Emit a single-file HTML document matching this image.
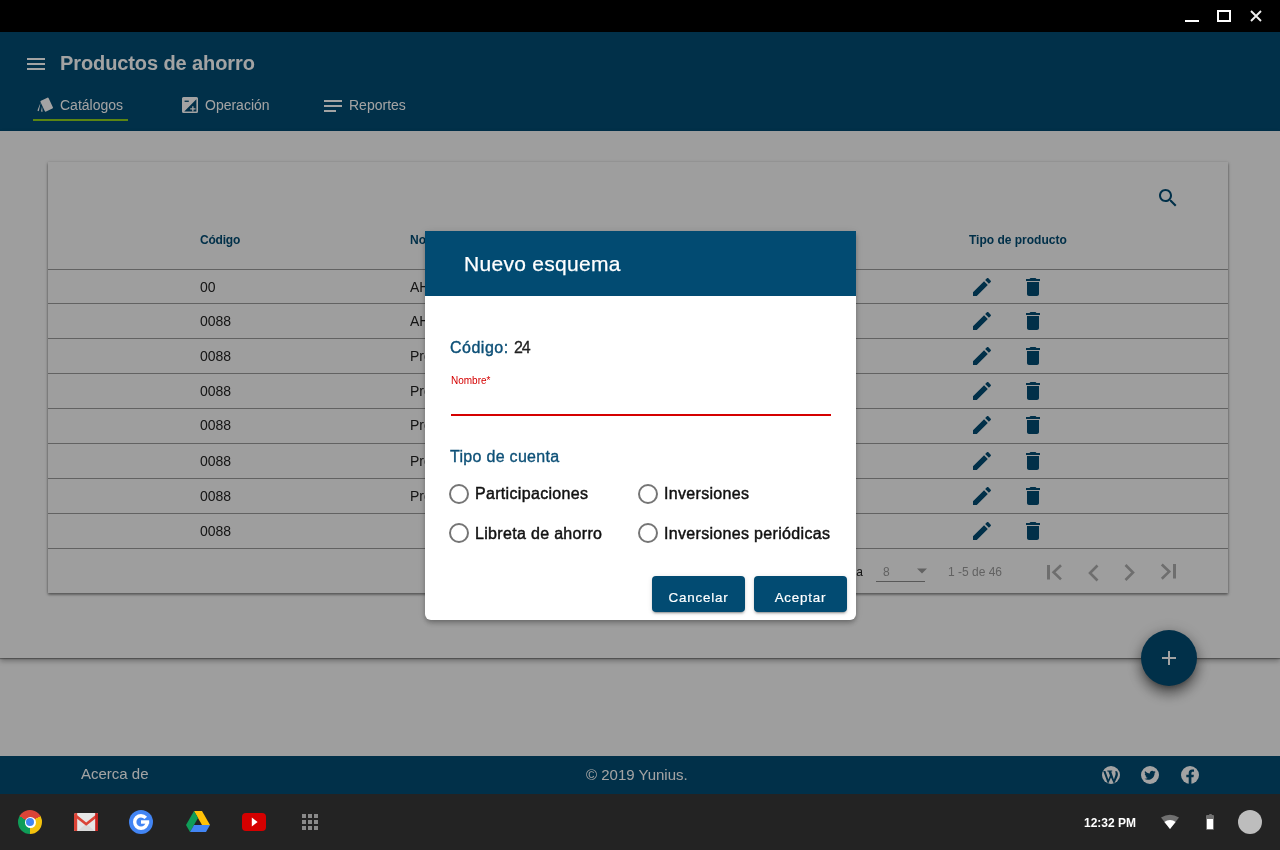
<!DOCTYPE html>
<html><head><meta charset="utf-8">
<style>
*{margin:0;padding:0;box-sizing:border-box}
html,body{width:1280px;height:850px;overflow:hidden;background:#f7f7f7;font-family:"Liberation Sans",sans-serif}
.abs{position:absolute}
.t{position:absolute;white-space:nowrap;line-height:1;will-change:transform}
#titlebar{left:0;top:0;width:1280px;height:32px;background:#000}
#app{left:0;top:32px;width:1280px;height:762px;background:#f7f7f7;overflow:hidden}
#shelf{left:0;top:794px;width:1280px;height:56px;background:#232323}
#overlay{left:0;top:32px;width:1280px;height:762px;background:rgba(0,0,0,0.36)}
</style></head>
<body>
<div id="app" class="abs">
<div class="abs" style="left:0;top:0;width:1280px;height:99px;background:#024b72"></div>
<div class="abs" style="left:27px;top:26px;width:18px;height:2px;background:#fff"></div>
<div class="abs" style="left:27px;top:31px;width:18px;height:2px;background:#fff"></div>
<div class="abs" style="left:27px;top:36px;width:18px;height:2px;background:#fff"></div>
<div class="t" style="left:60px;top:21.07px;font-size:20px;color:#fff;font-weight:bold;letter-spacing:-0.1px">Productos de ahorro</div>
<div class="t" style="left:60px;top:66.15px;font-size:14px;color:#fff;font-weight:normal">Catálogos</div>
<div class="t" style="left:205px;top:66.15px;font-size:14px;color:#fff;font-weight:normal">Operación</div>
<div class="t" style="left:349px;top:66.15px;font-size:14px;color:#fff;font-weight:normal">Reportes</div>
<div class="abs" style="left:33px;top:87px;width:95px;height:1.5px;background:#8fd11f"></div>
<svg class="abs" style="left:36px;top:65px" width="18" height="16" viewBox="0 0 18 16">
<rect x="6.2" y="1.6" width="9" height="12" rx="1" transform="rotate(-25 10.7 7.6)" fill="#fff"/>
<path d="M4.6 5.5 L1.4 13.6 L2.8 14.2 Z" fill="#fff"/><path d="M6.0 9.5 L5.0 14.6 L6.6 14.8 Z" fill="#fff"/>
</svg>
<svg class="abs" style="left:182px;top:65px" width="16" height="16" viewBox="0 0 16 16">
<path d="M1.5 0h13A1.5 1.5 0 0 1 16 1.5v13a1.5 1.5 0 0 1-1.5 1.5h-13A1.5 1.5 0 0 1 0 14.5v-13A1.5 1.5 0 0 1 1.5 0z M14.4 2.2 L2.2 14.4 H14.4 Z" fill="#fff" fill-rule="evenodd"/>
<rect x="2.6" y="3.6" width="4.2" height="1.3" fill="#024b72"/>
<rect x="3" y="3.6" width="0" height="0" fill="#fff"/>
<path d="M10.2 9.2h1.3v2h2v1.3h-2v2h-1.3v-2h-2v-1.3h2z" fill="#fff"/>
</svg>
<div class="abs" style="left:324px;top:68px;width:18px;height:2px;background:#fff"></div>
<div class="abs" style="left:324px;top:73px;width:18px;height:2px;background:#fff"></div>
<div class="abs" style="left:324px;top:78px;width:12px;height:2px;background:#fff"></div>
<div class="abs" style="left:0;top:99px;width:1280px;height:527px;box-shadow:0 1px 1px rgba(0,0,0,.3),0 3px 5px rgba(0,0,0,.3);background:#f7f7f7"></div>
<div class="abs" style="left:48px;top:130px;width:1180px;height:431px;background:#f7f7f7;box-shadow:0 1px 3px rgba(0,0,0,.4),0 2px 2px rgba(0,0,0,.2)"></div>
<svg class="abs" style="left:1156px;top:154px" width="24" height="24" viewBox="0 0 24 24"><path fill="#024b72" d="M15.5 14h-.79l-.28-.27C15.41 12.59 16 11.11 16 9.5 16 5.91 13.09 3 9.5 3S3 5.91 3 9.5 5.91 16 9.5 16c1.61 0 3.09-.59 4.23-1.57l.27.28v.79l5 4.99L20.49 19l-4.99-5zm-6 0C7.01 14 5 11.99 5 9.5S7.01 5 9.5 5 14 7.01 14 9.5 11.99 14 9.5 14z"/></svg>
<div class="t" style="left:200px;top:201.84px;font-size:12px;color:#024b72;font-weight:bold;letter-spacing:-0.2px">Código</div>
<div class="t" style="left:410px;top:201.84px;font-size:12px;color:#024b72;font-weight:bold">Nombre</div>
<div class="t" style="left:969px;top:201.84px;font-size:12px;color:#024b72;font-weight:bold">Tipo de producto</div>
<div class="abs" style="left:48px;top:237px;width:1180px;height:1px;background:#9a9a9a"></div>
<div class="abs" style="left:48px;top:271px;width:1180px;height:1px;background:#9a9a9a"></div>
<div class="abs" style="left:48px;top:306px;width:1180px;height:1px;background:#9a9a9a"></div>
<div class="abs" style="left:48px;top:341px;width:1180px;height:1px;background:#9a9a9a"></div>
<div class="abs" style="left:48px;top:376px;width:1180px;height:1px;background:#9a9a9a"></div>
<div class="abs" style="left:48px;top:411px;width:1180px;height:1px;background:#9a9a9a"></div>
<div class="abs" style="left:48px;top:446px;width:1180px;height:1px;background:#9a9a9a"></div>
<div class="abs" style="left:48px;top:481px;width:1180px;height:1px;background:#9a9a9a"></div>
<div class="abs" style="left:48px;top:516px;width:1180px;height:1px;background:#9a9a9a"></div>
<div class="t" style="left:200px;top:248.15px;font-size:14px;color:#222;font-weight:normal">00</div>
<div class="t" style="left:410px;top:248.15px;font-size:14px;color:#222;font-weight:normal">AHORRO</div>
<svg class="abs" style="left:970px;top:242.5px" width="24" height="24" viewBox="0 0 24 24"><path fill="#024b72" d="M3 17.25V21h3.75L17.81 9.94l-3.75-3.75L3 17.25zM20.71 7.04c.39-.39.39-1.02 0-1.41l-2.34-2.34c-.39-.39-1.02-.39-1.41 0l-1.83 1.83 3.75 3.75 1.83-1.83z"/></svg>
<svg class="abs" style="left:1021px;top:242.5px" width="24" height="24" viewBox="0 0 24 24"><path fill="#024b72" d="M6 19c0 1.1.9 2 2 2h8c1.1 0 2-.9 2-2V7H6v12zM19 4h-3.5l-1-1h-5l-1 1H5v2h14V4z"/></svg>
<div class="t" style="left:200px;top:282.15px;font-size:14px;color:#222;font-weight:normal">0088</div>
<div class="t" style="left:410px;top:282.15px;font-size:14px;color:#222;font-weight:normal">AHORRO</div>
<svg class="abs" style="left:970px;top:276.5px" width="24" height="24" viewBox="0 0 24 24"><path fill="#024b72" d="M3 17.25V21h3.75L17.81 9.94l-3.75-3.75L3 17.25zM20.71 7.04c.39-.39.39-1.02 0-1.41l-2.34-2.34c-.39-.39-1.02-.39-1.41 0l-1.83 1.83 3.75 3.75 1.83-1.83z"/></svg>
<svg class="abs" style="left:1021px;top:276.5px" width="24" height="24" viewBox="0 0 24 24"><path fill="#024b72" d="M6 19c0 1.1.9 2 2 2h8c1.1 0 2-.9 2-2V7H6v12zM19 4h-3.5l-1-1h-5l-1 1H5v2h14V4z"/></svg>
<div class="t" style="left:200px;top:317.15px;font-size:14px;color:#222;font-weight:normal">0088</div>
<div class="t" style="left:410px;top:317.15px;font-size:14px;color:#222;font-weight:normal">Producto</div>
<svg class="abs" style="left:970px;top:311.5px" width="24" height="24" viewBox="0 0 24 24"><path fill="#024b72" d="M3 17.25V21h3.75L17.81 9.94l-3.75-3.75L3 17.25zM20.71 7.04c.39-.39.39-1.02 0-1.41l-2.34-2.34c-.39-.39-1.02-.39-1.41 0l-1.83 1.83 3.75 3.75 1.83-1.83z"/></svg>
<svg class="abs" style="left:1021px;top:311.5px" width="24" height="24" viewBox="0 0 24 24"><path fill="#024b72" d="M6 19c0 1.1.9 2 2 2h8c1.1 0 2-.9 2-2V7H6v12zM19 4h-3.5l-1-1h-5l-1 1H5v2h14V4z"/></svg>
<div class="t" style="left:200px;top:352.15px;font-size:14px;color:#222;font-weight:normal">0088</div>
<div class="t" style="left:410px;top:352.15px;font-size:14px;color:#222;font-weight:normal">Producto</div>
<svg class="abs" style="left:970px;top:346.5px" width="24" height="24" viewBox="0 0 24 24"><path fill="#024b72" d="M3 17.25V21h3.75L17.81 9.94l-3.75-3.75L3 17.25zM20.71 7.04c.39-.39.39-1.02 0-1.41l-2.34-2.34c-.39-.39-1.02-.39-1.41 0l-1.83 1.83 3.75 3.75 1.83-1.83z"/></svg>
<svg class="abs" style="left:1021px;top:346.5px" width="24" height="24" viewBox="0 0 24 24"><path fill="#024b72" d="M6 19c0 1.1.9 2 2 2h8c1.1 0 2-.9 2-2V7H6v12zM19 4h-3.5l-1-1h-5l-1 1H5v2h14V4z"/></svg>
<div class="t" style="left:200px;top:386.15px;font-size:14px;color:#222;font-weight:normal">0088</div>
<div class="t" style="left:410px;top:386.15px;font-size:14px;color:#222;font-weight:normal">Producto</div>
<svg class="abs" style="left:970px;top:380.5px" width="24" height="24" viewBox="0 0 24 24"><path fill="#024b72" d="M3 17.25V21h3.75L17.81 9.94l-3.75-3.75L3 17.25zM20.71 7.04c.39-.39.39-1.02 0-1.41l-2.34-2.34c-.39-.39-1.02-.39-1.41 0l-1.83 1.83 3.75 3.75 1.83-1.83z"/></svg>
<svg class="abs" style="left:1021px;top:380.5px" width="24" height="24" viewBox="0 0 24 24"><path fill="#024b72" d="M6 19c0 1.1.9 2 2 2h8c1.1 0 2-.9 2-2V7H6v12zM19 4h-3.5l-1-1h-5l-1 1H5v2h14V4z"/></svg>
<div class="t" style="left:200px;top:422.15px;font-size:14px;color:#222;font-weight:normal">0088</div>
<div class="t" style="left:410px;top:422.15px;font-size:14px;color:#222;font-weight:normal">Producto</div>
<svg class="abs" style="left:970px;top:416.5px" width="24" height="24" viewBox="0 0 24 24"><path fill="#024b72" d="M3 17.25V21h3.75L17.81 9.94l-3.75-3.75L3 17.25zM20.71 7.04c.39-.39.39-1.02 0-1.41l-2.34-2.34c-.39-.39-1.02-.39-1.41 0l-1.83 1.83 3.75 3.75 1.83-1.83z"/></svg>
<svg class="abs" style="left:1021px;top:416.5px" width="24" height="24" viewBox="0 0 24 24"><path fill="#024b72" d="M6 19c0 1.1.9 2 2 2h8c1.1 0 2-.9 2-2V7H6v12zM19 4h-3.5l-1-1h-5l-1 1H5v2h14V4z"/></svg>
<div class="t" style="left:200px;top:457.15px;font-size:14px;color:#222;font-weight:normal">0088</div>
<div class="t" style="left:410px;top:457.15px;font-size:14px;color:#222;font-weight:normal">Producto</div>
<svg class="abs" style="left:970px;top:451.5px" width="24" height="24" viewBox="0 0 24 24"><path fill="#024b72" d="M3 17.25V21h3.75L17.81 9.94l-3.75-3.75L3 17.25zM20.71 7.04c.39-.39.39-1.02 0-1.41l-2.34-2.34c-.39-.39-1.02-.39-1.41 0l-1.83 1.83 3.75 3.75 1.83-1.83z"/></svg>
<svg class="abs" style="left:1021px;top:451.5px" width="24" height="24" viewBox="0 0 24 24"><path fill="#024b72" d="M6 19c0 1.1.9 2 2 2h8c1.1 0 2-.9 2-2V7H6v12zM19 4h-3.5l-1-1h-5l-1 1H5v2h14V4z"/></svg>
<div class="t" style="left:200px;top:492.15px;font-size:14px;color:#222;font-weight:normal">0088</div>
<svg class="abs" style="left:970px;top:486.5px" width="24" height="24" viewBox="0 0 24 24"><path fill="#024b72" d="M3 17.25V21h3.75L17.81 9.94l-3.75-3.75L3 17.25zM20.71 7.04c.39-.39.39-1.02 0-1.41l-2.34-2.34c-.39-.39-1.02-.39-1.41 0l-1.83 1.83 3.75 3.75 1.83-1.83z"/></svg>
<svg class="abs" style="left:1021px;top:486.5px" width="24" height="24" viewBox="0 0 24 24"><path fill="#024b72" d="M6 19c0 1.1.9 2 2 2h8c1.1 0 2-.9 2-2V7H6v12zM19 4h-3.5l-1-1h-5l-1 1H5v2h14V4z"/></svg>
<div class="t" style="left:0px;top:534.34px;font-size:12px;color:#222;font-weight:normal;width:863px;text-align:right;left:auto;right:417px">Items por página</div>
<div class="t" style="left:883px;top:534.34px;font-size:12px;color:#999;font-weight:normal">8</div>
<div class="abs" style="left:876px;top:549px;width:49px;height:1px;background:#8a8a8a"></div>
<svg class="abs" style="left:917px;top:536px" width="10" height="6" viewBox="0 0 10 5"><path d="M0 0h10L5 5z" fill="#999"/></svg>
<div class="t" style="left:948px;top:534.34px;font-size:12px;color:#999;font-weight:normal">1 -5 de 46</div>
<svg class="abs" style="left:1040px;top:528px" width="140" height="24" viewBox="1040 560 140 24">
<rect x="1047" y="565" width="3" height="14.5" fill="#acacac"/>
<path d="M1061 565.2 L1053.6 572.3 L1061 579.4" fill="none" stroke="#acacac" stroke-width="2.6"/>
<path d="M1097.5 565.5 L1090 573 L1097.5 580.5" fill="none" stroke="#acacac" stroke-width="2.6"/>
<path d="M1125.5 565 L1133 572.5 L1125.5 580" fill="none" stroke="#acacac" stroke-width="2.6"/>
<path d="M1161.8 564.5 L1169.2 571.6 L1161.8 578.7" fill="none" stroke="#acacac" stroke-width="2.6"/>
<rect x="1173" y="564" width="3" height="14.5" fill="#acacac"/>
</svg>
<div class="abs" style="left:1141px;top:598px;width:56px;height:56px;border-radius:50%;background:#024b72;box-shadow:0 5px 5px -3px rgba(0,0,0,.3),0 8px 12px 1px rgba(0,0,0,.3),0 3px 14px 2px rgba(0,0,0,.2)"></div>
<div class="abs" style="left:1162px;top:625px;width:14px;height:1.6px;background:#fff"></div>
<div class="abs" style="left:1168.2px;top:619px;width:1.6px;height:14px;background:#fff"></div>
<div class="abs" style="left:0;top:724px;width:1280px;height:38px;background:#024b72"></div>
<div class="t" style="left:81px;top:733.80px;font-size:15px;color:#fff;font-weight:normal">Acerca de</div>
<div class="t" style="left:586px;top:735.30px;font-size:15px;color:#fff;font-weight:normal">© 2019 Yunius.</div>
<svg class="abs" style="left:1102px;top:734px" width="18" height="18" viewBox="0 0 18 18"><circle cx="9" cy="9" r="9" fill="#fff"/>
<path d="M1.2 5.0 L3.4 5.0 L6.4 13.6 L7.9 9.6 L6.4 5.6 L5.3 5.6 L5.3 4.6 L10.2 4.6 L10.2 5.6 L9.2 5.6 L11.9 13.6 L13.4 9.0 C13.9 7.4 13.6 6.2 13.0 5.2 L15.0 5.2 C16.2 7.0 16.2 9.0 15.2 11.2 L12.0 18 L9.0 11.6 L6.0 18 Z" fill="#024b72"/></svg>
<svg class="abs" style="left:1141px;top:734px" width="18" height="18" viewBox="0 0 18 18"><circle cx="9" cy="9" r="9" fill="#fff"/>
<path transform="translate(9 9.6) scale(1.12) translate(-9 -9)" fill="#024b72" d="M14 5.6c-.4.2-.8.3-1.2.3.4-.3.8-.7.9-1.1-.4.2-.9.4-1.3.5-.4-.4-.9-.7-1.5-.7-1.1 0-2.1.9-2.1 2.1 0 .2 0 .3.1.5-1.7-.1-3.3-.9-4.3-2.2-.2.3-.3.7-.3 1 0 .7.4 1.4.9 1.7-.3 0-.7-.1-.9-.3 0 1 .7 1.9 1.7 2.1-.3.1-.6.1-.9 0 .3.8 1.1 1.4 2 1.5-.7.6-1.6.9-2.6.9H4c.9.6 2 .9 3.2.9 3.8 0 5.9-3.2 5.9-5.9v-.3c.4-.3.7-.7.9-1.1z"/></svg>
<svg class="abs" style="left:1181px;top:734px" width="18" height="18" viewBox="0 0 18 18"><circle cx="9" cy="9" r="9" fill="#fff"/>
<path fill="#024b72" d="M7.7 18V11.2H5.3V8.8h2.4V7c0-2.3 1.3-3.6 3.4-3.6.9 0 1.9.15 1.9.15v2.2h-1.1c-1.1 0-1.5.7-1.5 1.4v1.65h2.5l-.4 2.4h-2.1V18z"/></svg>
</div>
<div id="overlay" class="abs"></div>
<div class="abs" style="left:425px;top:231px;width:431px;height:389px;background:#fff;border-radius:0 0 6px 6px;box-shadow:0 2px 4px -1px rgba(0,0,0,.2),0 4px 5px 0 rgba(0,0,0,.14),0 1px 10px 0 rgba(0,0,0,.12);overflow:hidden">
<div class="abs" style="left:0;top:0;width:431px;height:65px;background:#024b72"></div>
<div class="t" style="left:39px;top:21.92px;font-size:21px;color:#fff;font-weight:normal;letter-spacing:0.3px;-webkit-text-stroke:0.25px #fff">Nuevo esquema</div>
<div class="t" style="left:25px;top:109.26px;font-size:16px;color:#0d5077;font-weight:normal;letter-spacing:0.5px;-webkit-text-stroke:0.4px #0d5077">Código:</div>
<div class="t" style="left:88.79999999999995px;top:109.26px;font-size:16px;color:#222;font-weight:normal;letter-spacing:-1.2px;-webkit-text-stroke:0.3px #222">24</div>
<div class="t" style="left:26.399999999999977px;top:144.53px;font-size:10px;color:#d50000;font-weight:normal">Nombre*</div>
<div class="abs" style="left:26px;top:183px;width:380px;height:2px;background:#d50000"></div>
<div class="t" style="left:24.899999999999977px;top:218.46px;font-size:16px;color:#0d5077;font-weight:normal;letter-spacing:0.3px;-webkit-text-stroke:0.35px #0d5077">Tipo de cuenta</div>
<div class="abs" style="left:24px;top:253px;width:20px;height:20px;border:2px solid rgba(0,0,0,.54);border-radius:50%"></div>
<div class="t" style="left:49.69999999999999px;top:255.26px;font-size:16px;color:#111;font-weight:normal;letter-spacing:0.32px;-webkit-text-stroke:0.45px #111">Participaciones</div>
<div class="abs" style="left:213px;top:253px;width:20px;height:20px;border:2px solid rgba(0,0,0,.54);border-radius:50%"></div>
<div class="t" style="left:238.70000000000005px;top:255.26px;font-size:16px;color:#111;font-weight:normal;letter-spacing:0.32px;-webkit-text-stroke:0.45px #111">Inversiones</div>
<div class="abs" style="left:24px;top:292px;width:20px;height:20px;border:2px solid rgba(0,0,0,.54);border-radius:50%"></div>
<div class="t" style="left:49.69999999999999px;top:295.26px;font-size:16px;color:#111;font-weight:normal;letter-spacing:0.32px;-webkit-text-stroke:0.45px #111">Libreta de ahorro</div>
<div class="abs" style="left:213px;top:292px;width:20px;height:20px;border:2px solid rgba(0,0,0,.54);border-radius:50%"></div>
<div class="t" style="left:238.70000000000005px;top:295.26px;font-size:16px;color:#111;font-weight:normal;letter-spacing:0.32px;-webkit-text-stroke:0.45px #111">Inversiones periódicas</div>
<div class="abs" style="left:227px;top:345px;width:93px;height:36px;background:#024b72;border-radius:4px;box-shadow:0 3px 1px -2px rgba(0,0,0,.2),0 2px 2px 0 rgba(0,0,0,.14),0 1px 5px 0 rgba(0,0,0,.12)"></div>
<div class="t" style="left:227px;top:345px;width:93px;height:36px;line-height:36px;text-align:center;font-size:13.4px;font-weight:normal;color:#fff;letter-spacing:0.8px;-webkit-text-stroke:0.2px #fff;padding-top:4px">Cancelar</div>
<div class="abs" style="left:329px;top:345px;width:93px;height:36px;background:#024b72;border-radius:4px;box-shadow:0 3px 1px -2px rgba(0,0,0,.2),0 2px 2px 0 rgba(0,0,0,.14),0 1px 5px 0 rgba(0,0,0,.12)"></div>
<div class="t" style="left:329px;top:345px;width:93px;height:36px;line-height:36px;text-align:center;font-size:13.4px;font-weight:normal;color:#fff;letter-spacing:0.8px;-webkit-text-stroke:0.2px #fff;padding-top:4px">Aceptar</div>
</div>
<div id="titlebar" class="abs">
  <div class="abs" style="left:1185px;top:20px;width:14px;height:2px;background:#fff"></div>
  <div class="abs" style="left:1217px;top:10px;width:14px;height:12px;border:2px solid #fff"></div>
  <svg class="abs" style="left:1248px;top:8px" width="16" height="16" viewBox="0 0 16 16"><path d="M3 3L13 13M13 3L3 13" stroke="#f0f0f0" stroke-width="1.9"/></svg>
</div>
<div id="shelf" class="abs">
<div class="abs" style="left:18px;top:16px;width:24px;height:24px;border-radius:50%;background:conic-gradient(from -62deg,#db4437 0 122deg,#f4c20d 122deg 240deg,#0f9d58 240deg 360deg)"></div>
<div class="abs" style="left:24.5px;top:22.5px;width:11px;height:11px;border-radius:50%;background:#fff"></div>
<div class="abs" style="left:25.8px;top:23.799999999999955px;width:8.4px;height:8.4px;border-radius:50%;background:#4285f4"></div>
<svg class="abs" style="left:74px;top:18.5px" width="24.4" height="18.6" viewBox="0 0 24.4 18.6">
<rect x="0" y="0" width="24.4" height="18.6" rx="2" fill="#e6e6e6"/>
<path d="M3 18.6 L12.2 10.5 L21.4 18.6z" fill="#d9d9d9"/>
<path d="M1 0.6 L12.2 9.6 L23.4 0.6 L23.4 4 L12.2 12.8 L1 4z" fill="#db4437"/>
<path d="M0 2 A2 2 0 0 1 2 0 L3.2 0 L3.2 18.6 L2 18.6 A2 2 0 0 1 0 16.6z" fill="#db4437"/>
<path d="M21.2 0 L22.4 0 A2 2 0 0 1 24.4 2 L24.4 16.6 A2 2 0 0 1 22.4 18.6 L21.2 18.6z" fill="#c5221f"/></svg>
<svg class="abs" style="left:129px;top:16px" width="24" height="24" viewBox="0 0 24 24">
<circle cx="12" cy="12" r="12" fill="#4285f4"/>
<circle cx="12" cy="12" r="6.3" fill="none" stroke="#fff" stroke-width="3.4" stroke-dasharray="34.2 5.4"/><rect x="12" y="10.3" width="8.2" height="3.4" fill="#fff"/></svg>
<svg class="abs" style="left:186px;top:17px" width="24" height="21" viewBox="0 0 24 21">
<path d="M8 0h8l8 14h-8z" fill="#ffc107"/><path d="M8 0l4 7-8 14L0 14z" fill="#0f9d58"/><path d="M4 21l4-7h16l-4 7z" fill="#4285f4"/></svg>
<svg class="abs" style="left:242px;top:19px" width="24" height="18" viewBox="0 0 24 18">
<rect width="24" height="18" rx="4" fill="#d50000"/><path d="M9.8 4.6 L15.6 9 L9.8 13.4z" fill="#fff"/></svg>
<div class="abs" style="left:302px;top:20px;width:4px;height:4px;background:#8a8a8a"></div>
<div class="abs" style="left:308px;top:20px;width:4px;height:4px;background:#8a8a8a"></div>
<div class="abs" style="left:314px;top:20px;width:4px;height:4px;background:#8a8a8a"></div>
<div class="abs" style="left:302px;top:26px;width:4px;height:4px;background:#8a8a8a"></div>
<div class="abs" style="left:308px;top:26px;width:4px;height:4px;background:#8a8a8a"></div>
<div class="abs" style="left:314px;top:26px;width:4px;height:4px;background:#8a8a8a"></div>
<div class="abs" style="left:302px;top:32px;width:4px;height:4px;background:#8a8a8a"></div>
<div class="abs" style="left:308px;top:32px;width:4px;height:4px;background:#8a8a8a"></div>
<div class="abs" style="left:314px;top:32px;width:4px;height:4px;background:#8a8a8a"></div>
<div class="t" style="left:1084px;top:22.84px;font-size:12px;color:#fff;font-weight:bold">12:32 PM</div>
<svg class="abs" style="left:1161px;top:19.799999999999955px" width="18" height="15" viewBox="0 0 18 15">
<path d="M9 15 L0 3.6 A17 17 0 0 1 18 3.6 Z" fill="#707070"/><path d="M9 15 L3.4 7.9 A9 9 0 0 1 14.6 7.9 Z" fill="#fff"/></svg>
<div class="abs" style="left:1208.5px;top:20px;width:3px;height:2px;background:#707070;border-radius:1px 1px 0 0"></div>
<div class="abs" style="left:1206px;top:21px;width:8px;height:15px;background:#707070;border-radius:1px"></div>
<div class="abs" style="left:1207px;top:25px;width:6px;height:10px;background:#fff"></div>
<div class="abs" style="left:1238px;top:16px;width:24px;height:24px;background:#bdbdbd;border-radius:50%"></div>
</div>
</body></html>
